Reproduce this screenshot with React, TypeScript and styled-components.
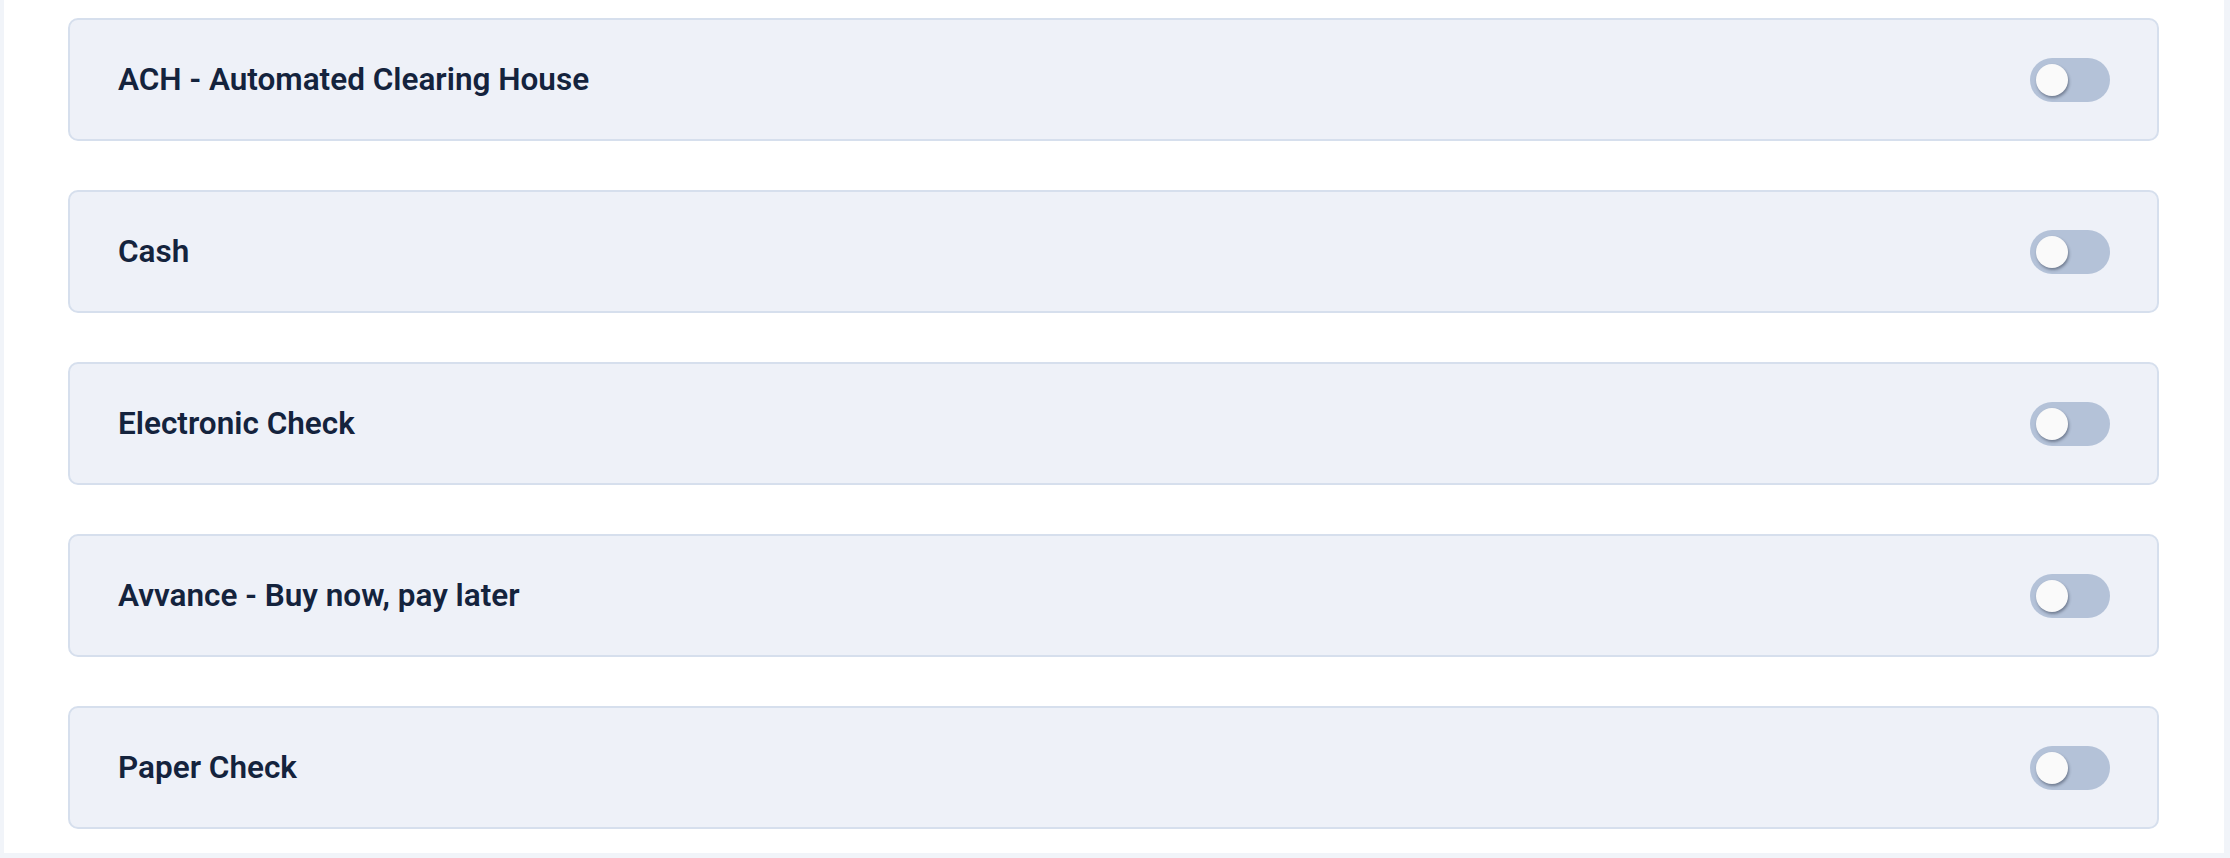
import React, { useState } from 'react';
import styled, { createGlobalStyle } from 'styled-components';

const GlobalStyle = createGlobalStyle`
  html, body {
    margin: 0;
    padding: 0;
    background: #f2f5fa;
    font-family: Roboto, 'Liberation Sans', Arial, sans-serif;
  }
`;

const methods = [
  'ACH - Automated Clearing House',
  'Cash',
  'Electronic Check',
  'Avvance - Buy now, pay later',
  'Paper Check',
];

export default function App() {
  const [enabled, setEnabled] = useState<Record<string, boolean>>({});

  return (
    <>
      <GlobalStyle />
      <Page>
        <Panel>
          {methods.map((name) => (
            <MethodCard key={name}>
              <MethodName>{name}</MethodName>
              <Toggle
                type="button"
                aria-pressed={!!enabled[name]}
                $on={!!enabled[name]}
                onClick={() => setEnabled((s) => ({ ...s, [name]: !s[name] }))}
              >
                <Knob $on={!!enabled[name]} />
              </Toggle>
            </MethodCard>
          ))}
        </Panel>
      </Page>
    </>
  );
}

const Page = styled.div`
  height: 858px;
  overflow: hidden;
  padding: 0 6px 0 4px;
  box-sizing: border-box;
  background: #f1f4f9;
`;

const Panel = styled.div`
  height: 853px;
  box-sizing: border-box;
  background: #ffffff;
  padding: 18px 65px 0 64px;
  display: flex;
  flex-direction: column;
  gap: 49px;
`;

const MethodCard = styled.div`
  height: 123px;
  box-sizing: border-box;
  display: flex;
  align-items: center;
  justify-content: space-between;
  padding: 0 47px 0 48px;
  background: #eef1f8;
  border: 2px solid #d6dfed;
  border-radius: 10px;
`;

const MethodName = styled.span`
  font-size: 31.5px;
  font-weight: 600;
  color: #14233d;
`;

const Toggle = styled.button<{ $on: boolean }>`
  position: relative;
  width: 80px;
  height: 44px;
  padding: 0;
  border: none;
  border-radius: 22px;
  background: ${(p) => (p.$on ? '#3b6fd8' : '#b4c2d8')};
  cursor: pointer;
`;

const Knob = styled.span<{ $on: boolean }>`
  position: absolute;
  top: 6px;
  left: ${(p) => (p.$on ? '42px' : '6px')};
  width: 32px;
  height: 32px;
  border-radius: 50%;
  background: #fafafa;
  box-shadow: 1px 2px 3px rgba(30, 40, 60, 0.45);
`;
